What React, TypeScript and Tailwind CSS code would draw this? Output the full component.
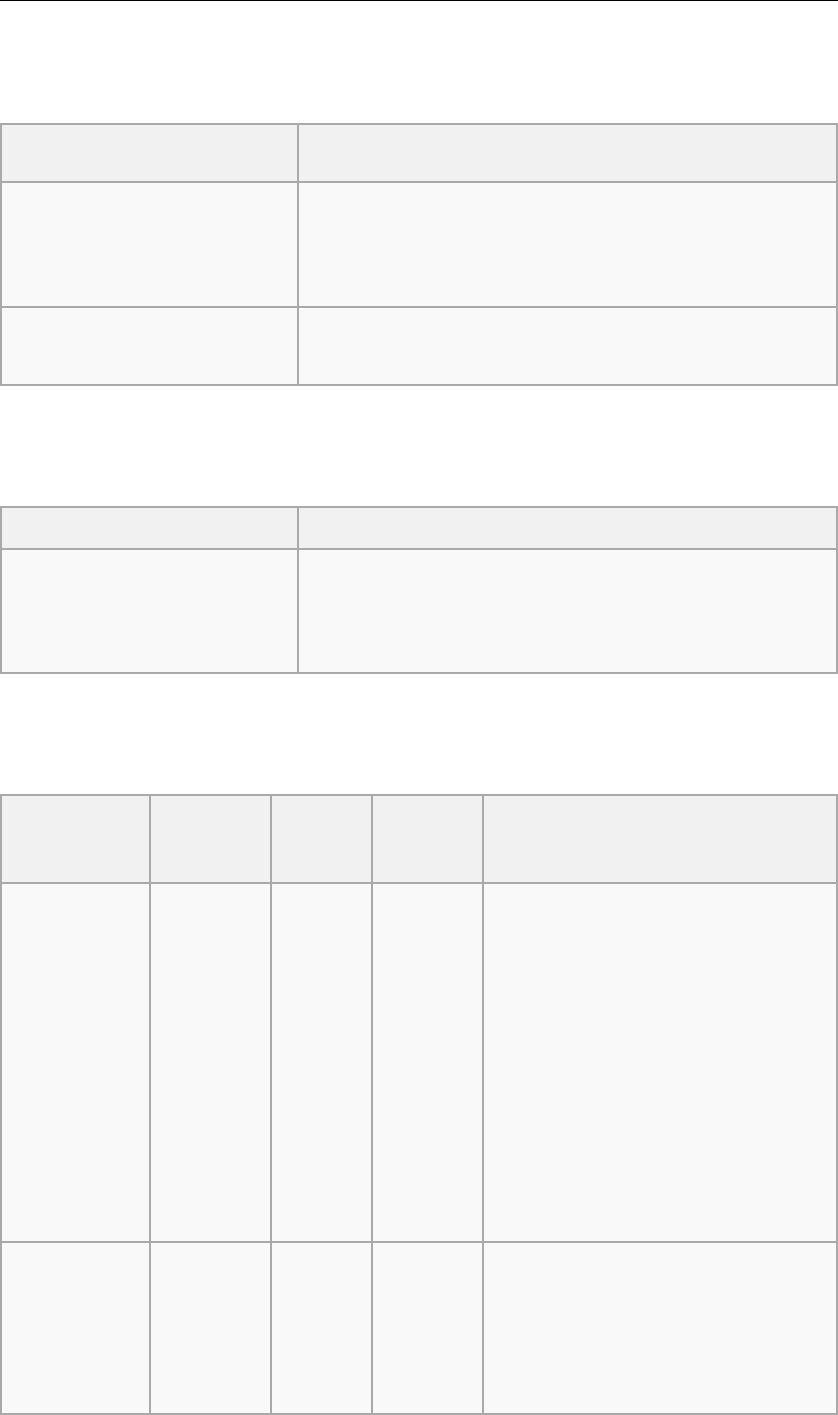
export default function App() {
  return (
    <div className="w-[838px] bg-white" style={{ fontFamily: '"Liberation Sans", Arial, sans-serif' }}>
      <div className="h-px w-full bg-black" />
      <div className="h-[122px]" />
      <div className="grid grid-cols-[295px_537px] grid-rows-[56px_123px_76px] gap-[2px] bg-[#a9a9a9] p-[2px]">
        <div className="bg-[#f1f1f1]" />
        <div className="bg-[#f1f1f1]" />
        <div className="bg-[#f9f9f9]" />
        <div className="bg-[#f9f9f9]" />
        <div className="bg-[#f9f9f9]" />
        <div className="bg-[#f9f9f9]" />
      </div>
      <div className="h-[120px]" />
      <div className="grid grid-cols-[295px_537px] grid-rows-[40px_122px] gap-[2px] bg-[#a9a9a9] p-[2px]">
        <div className="bg-[#f1f1f1]" />
        <div className="bg-[#f1f1f1]" />
        <div className="bg-[#f9f9f9]" />
        <div className="bg-[#f9f9f9]" />
      </div>
      <div className="h-[120px]" />
      <div className="grid grid-cols-[147px_119px_99px_109px_352px] grid-rows-[86px_357px_170px] gap-[2px] bg-[#a9a9a9] p-[2px]">
        <div className="bg-[#f1f1f1]" />
        <div className="bg-[#f1f1f1]" />
        <div className="bg-[#f1f1f1]" />
        <div className="bg-[#f1f1f1]" />
        <div className="bg-[#f1f1f1]" />
        <div className="bg-[#f9f9f9]" />
        <div className="bg-[#f9f9f9]" />
        <div className="bg-[#f9f9f9]" />
        <div className="bg-[#f9f9f9]" />
        <div className="bg-[#f9f9f9]" />
        <div className="bg-[#f9f9f9]" />
        <div className="bg-[#f9f9f9]" />
        <div className="bg-[#f9f9f9]" />
        <div className="bg-[#f9f9f9]" />
        <div className="bg-[#f9f9f9]" />
      </div>
    </div>
  );
}
